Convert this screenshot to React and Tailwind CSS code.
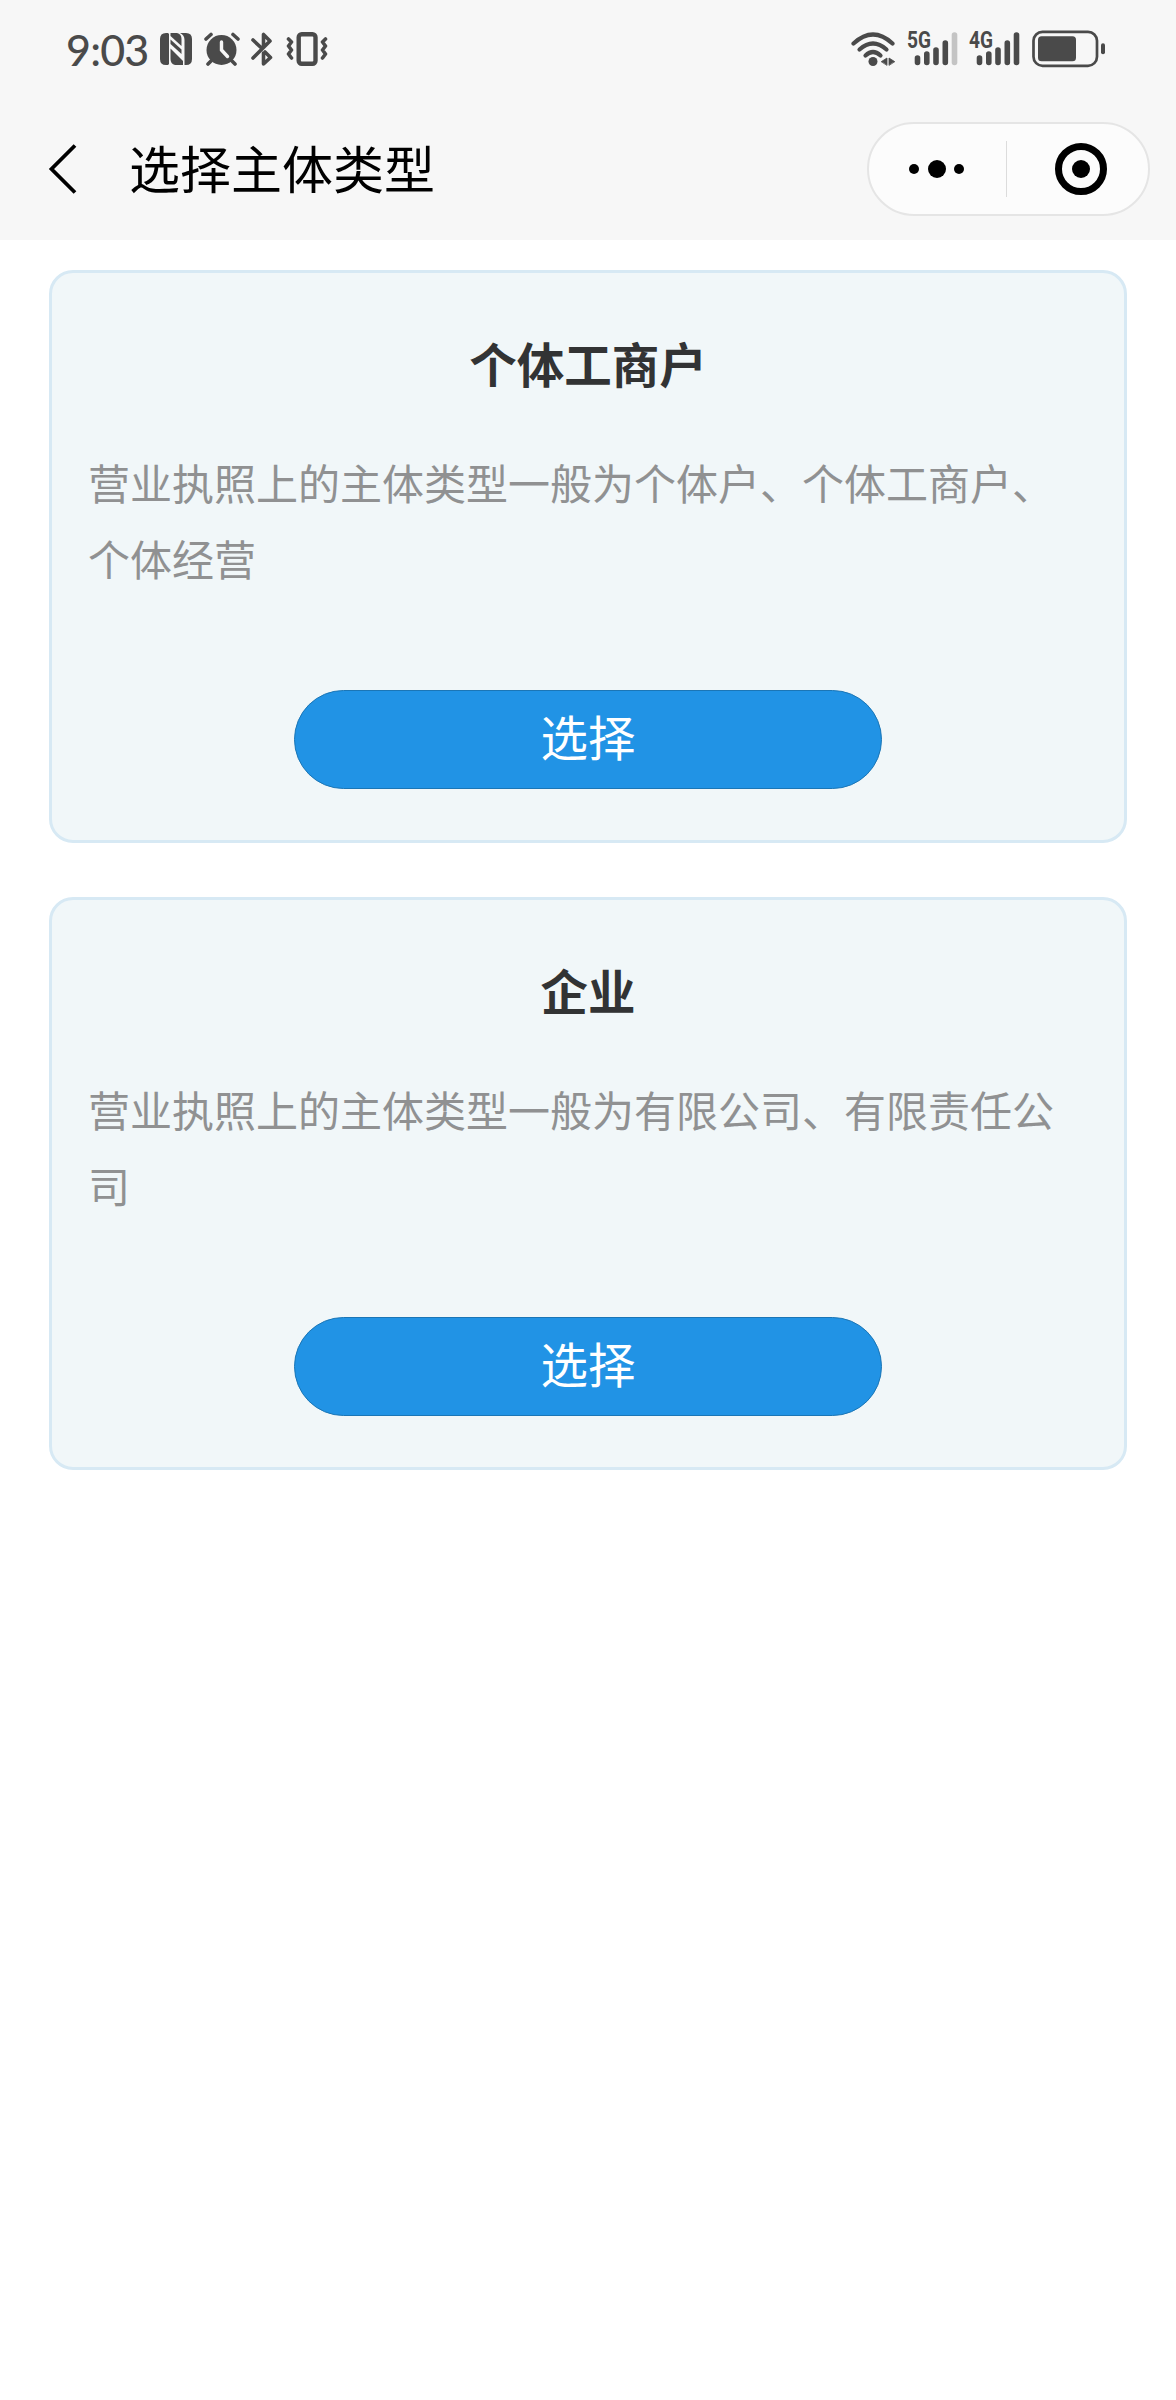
const INK = "#4a4a4a";

function Nfc() {
  return (
    <svg className="ml-[12px] h-8 w-8" viewBox="0 0 32 32" fill={INK}>
      <path d="M6 0H8L9 1V31L8 32H6Q0 32 0 26V6Q0 0 6 0Z" />
      <path d="M20 0H26Q32 0 32 6V26Q32 32 26 32H24.500V7Q24.500 2 20 0Z" />
      <path d="M10.500 0H17Q21.500 1 21.500 6V13L10.500 3Z" />
      <path d="M10.500 6.500L21.500 16.500V21L10.500 11Z" />
      <path d="M10.500 15.500L23 28V32H15Q10.500 31 10.500 26Z" />
    </svg>
  );
}

function Alarm() {
  return (
    <svg className="ml-3 h-[34px] w-9" viewBox="0 0 36 34" fill="none" strokeLinecap="round">
      <circle cx="17.5" cy="18" r="15" fill={INK} />
      <path d="M2 7L7 2.5M29 2.5L34 7M7 29L4 32M28 29L31 32" stroke={INK} strokeWidth="3.6" />
      <path d="M17.5 10V18L23.5 24.5" stroke="#f7f7f7" strokeWidth="3.4" />
    </svg>
  );
}

function Bluetooth() {
  return (
    <svg className="ml-[11px] h-[34px] w-[22px]" viewBox="0 0 22 34" fill="none" stroke={INK} strokeWidth="3.6" strokeLinecap="round" strokeLinejoin="round">
      <path d="M2 8L11 16.500M2 26L19 9L12.500 2.500V14M12.500 21V32L19.500 25.500L14 20" />
    </svg>
  );
}

function Vibrate() {
  return (
    <svg className="ml-[13px] h-[34px] w-[42px]" viewBox="0 0 42 34" fill="none" stroke={INK} strokeLinecap="round" strokeLinejoin="round">
      <rect x="12.7" y="2.2" width="16.8" height="29.6" rx="3" strokeWidth="4.400" />
      <path d="M2.5 7L5.5 10L2.5 14L5.5 18L2.5 22L5.5 26M39.500 7L36.500 10L39.500 14L36.500 18L39.500 22L36.500 26" strokeWidth="3.6" />
    </svg>
  );
}

function Wifi() {
  return (
    <svg className="h-[35px] w-[45px]" viewBox="0 0 45 35" fill="none" stroke={INK} strokeWidth="4.2" strokeLinecap="round">
      <path d="M2.500 11.500Q22 -6.500 41.500 11.500" />
      <path d="M8.500 17.500Q22 5.500 35.500 17.500" />
      <path d="M14.500 23.500Q22 16.500 29.500 23.500" />
      <circle cx="22" cy="29.500" r="4.500" fill={INK} stroke="none" />
      <path d="M30.500 29.500L36 26V33ZM43.500 29.500L38 26V33Z" fill={INK} stroke={INK} strokeWidth="0.8" />
    </svg>
  );
}

function Signal({ label, weak }) {
  return (
    <svg className="h-[36px] w-[52px] overflow-visible" viewBox="0 0 52 36">
      <text x="0" y="17" textLength="24" lengthAdjust="spacingAndGlyphs" fontFamily="Roboto, sans-serif" fontWeight="700" fontSize="23" fill={INK}>{label}</text>
      <g stroke={INK} strokeWidth="5.6" strokeLinecap="round">
        <path d="M10.500 27V31.500M19.800 23V31.500M29 19V31.500M38.300 12V31.500" />
        <path d="M47.500 4V31.500" stroke={weak ? "#c4c4c4" : INK} />
      </g>
    </svg>
  );
}

function Battery() {
  return (
    <svg className="ml-[11px] h-[38px] w-[74px]" viewBox="0 0 74 38">
      <rect x="1.500" y="1.800" width="63.500" height="34" rx="9" fill="none" stroke={INK} strokeWidth="2.700" />
      <rect x="6" y="6.300" width="38" height="25" rx="3.500" fill={INK} />
      <rect x="69" y="13.300" width="4" height="11" rx="2" fill={INK} />
    </svg>
  );
}

function StatusBar() {
  return (
    <div className="flex h-[98px] items-center justify-between pl-[66px] pr-[70px]">
      <div className="flex items-center">
        <span className="w-[82px] whitespace-nowrap font-['Lato'] text-[43px] font-medium leading-none tracking-[-0.8px] text-[#4a4a4a]">9:03</span>
        <Nfc />
        <Alarm />
        <Bluetooth />
        <Vibrate />
      </div>
      <div className="flex items-center">
        <Wifi />
        <div className="ml-[11px] flex gap-[10px]">
          <Signal label="5G" weak />
          <Signal label="4G" />
        </div>
        <Battery />
      </div>
    </div>
  );
}

function NavBar() {
  return (
    <div className="flex h-[142px] items-center justify-between pl-12 pr-[26px]">
      <div className="flex items-center">
        <svg className="h-[50px] w-[30px]" viewBox="0 0 30 50" fill="none" stroke="#000" strokeWidth="3.800">
          <path d="M27 1.500L3.500 25L27 48.500" />
        </svg>
        <h1 className="ml-[51px] pb-[4px] text-[51px] leading-none text-black">选择主体类型</h1>
      </div>
      <div className="flex h-[94px] w-[283px] items-center rounded-full border-2 border-[#e5e5e5] bg-[#fcfcfc]">
        <div className="flex flex-1 items-center justify-center gap-[8.500px] pr-[2px]">
          <span className="size-[10px] rounded-full bg-black" />
          <span className="size-[18px] rounded-full bg-black" />
          <span className="size-[10px] rounded-full bg-black" />
        </div>
        <div className="h-14 w-px bg-[#dcdcdc]" />
        <div className="flex flex-1 items-center justify-center pl-[6px]">
          <div className="flex size-[52px] items-center justify-center rounded-full border-[7px] border-black">
            <span className="size-[18px] rounded-full bg-black" />
          </div>
        </div>
      </div>
    </div>
  );
}

function TypeCard({ title, text }) {
  return (
    <section className="flex h-[573px] flex-col items-center rounded-[24px] border-[3px] border-[#d7e9f4] bg-[#f1f7f9] pt-[55px]">
      <h2 className="text-[47.500px] font-bold leading-[70px] text-[#323334]">{title}</h2>
      <p className="mt-[46px] h-[152px] w-full px-9 text-[42px] leading-[76px] text-[#909192]">{text}</p>
      <button className="mt-[94px] flex h-[99px] w-[588px] items-center justify-center rounded-full border border-[#1b76b6] bg-[#2193e5] pb-2 text-[47.500px] leading-none text-white">
        选择
      </button>
    </section>
  );
}

export default function App() {
  return (
    <div className="min-h-[2400px] w-[1176px] bg-white font-['Noto_Sans_CJK_SC',sans-serif]">
      <header className="h-[240px] bg-[#f7f7f7]">
        <StatusBar />
        <NavBar />
      </header>
      <main className="flex flex-col gap-[54px] px-[49px] pt-[30px]">
        <TypeCard title="个体工商户" text="营业执照上的主体类型一般为个体户、个体工商户、个体经营" />
        <TypeCard title="企业" text="营业执照上的主体类型一般为有限公司、有限责任公司" />
      </main>
    </div>
  );
}
